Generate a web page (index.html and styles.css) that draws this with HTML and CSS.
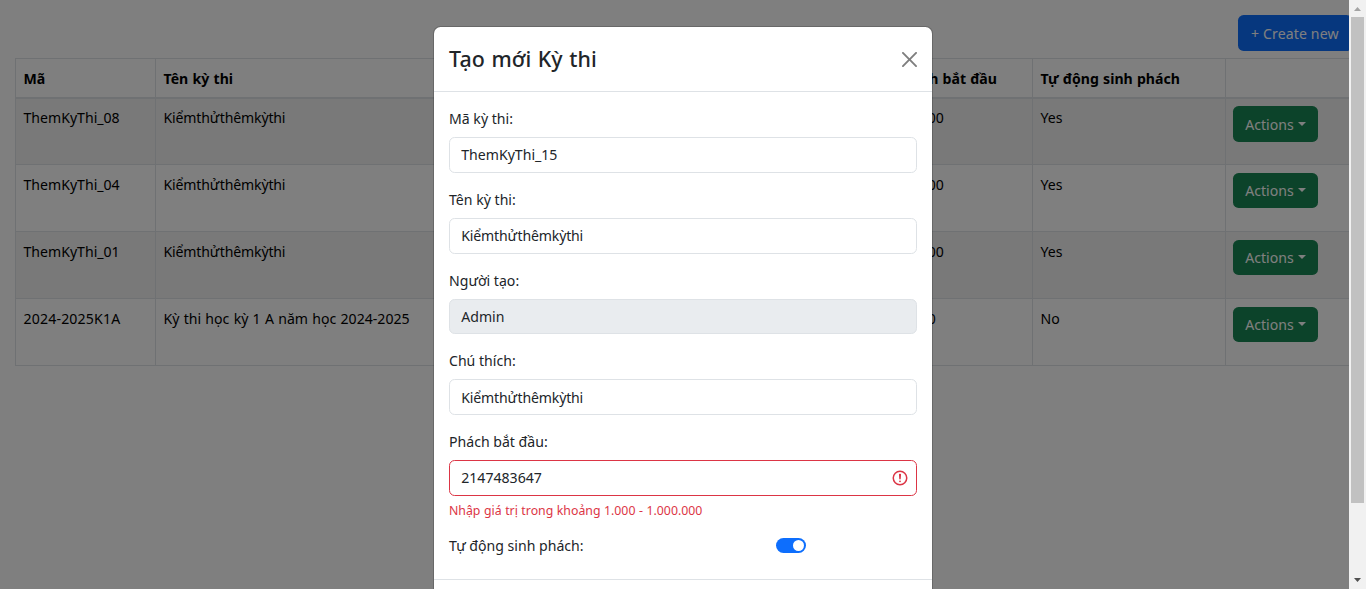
FILE: index.html
```html
<!DOCTYPE html>
<html lang="vi">
<head>
<meta charset="utf-8">
<title>Kỳ thi</title>
<link rel="stylesheet" href="styles.css">
</head>
<body>
<div class="window">
  <main class="page">
    <div class="toolbar"><button class="btn btn-primary">+ Create new</button></div>
    <table class="table">
      <colgroup><col class="c-code"><col class="c-name"><col class="c-start"><col class="c-auto"><col class="c-act"></colgroup>
      <thead>
        <tr><th>Mã</th><th>Tên kỳ thi</th><th>Phách bắt đầu</th><th>Tự động sinh phách</th><th></th></tr>
      </thead>
      <tbody>
        <tr><td>ThemKyThi_08</td><td><span class="tight">Kiểmthửthêmkỳthi</span></td><td>100000</td><td>Yes</td><td class="act"><button class="btn btn-success">Actions<i class="caret"></i></button></td></tr>
        <tr><td>ThemKyThi_04</td><td><span class="tight">Kiểmthửthêmkỳthi</span></td><td>100000</td><td>Yes</td><td class="act"><button class="btn btn-success">Actions<i class="caret"></i></button></td></tr>
        <tr><td>ThemKyThi_01</td><td><span class="tight">Kiểmthửthêmkỳthi</span></td><td>100000</td><td>Yes</td><td class="act"><button class="btn btn-success">Actions<i class="caret"></i></button></td></tr>
        <tr><td><span class="loose">2024-2025K1A</span></td><td>Kỳ thi học kỳ 1 A năm học 2024-2025</td><td>10000</td><td>No</td><td class="act"><button class="btn btn-success">Actions<i class="caret"></i></button></td></tr>
      </tbody>
    </table>
  </main>
  <div class="scrollbar">
    <svg class="arrow" viewBox="0 0 17 17"><path d="M5 11h7L8.500 7z" fill="#a3a3a3"/></svg>
    <div class="thumb"></div>
    <svg class="arrow arrow-down" viewBox="0 0 17 17"><path d="M5 6h7L8.500 10z" fill="#505050"/></svg>
  </div>
</div>
<div class="backdrop"></div>
<div class="modal">
  <div class="modal-header">
    <h4>Tạo mới Kỳ thi</h4>
    <svg class="close" viewBox="0 0 16 16"><path d="M.293.293a1 1 0 0 1 1.414 0L8 6.586 14.293.293a1 1 0 1 1 1.414 1.414L9.414 8l6.293 6.293a1 1 0 0 1-1.414 1.414L8 9.414l-6.293 6.293a1 1 0 0 1-1.414-1.414L6.586 8 .293 1.707a1 1 0 0 1 0-1.414z"/></svg>
  </div>
  <div class="modal-body">
    <div class="field"><label>Mã kỳ thi:</label><div class="input">ThemKyThi_15</div></div>
    <div class="field"><label>Tên kỳ thi:</label><div class="input"><span class="tight">Kiểmthửthêmkỳthi</span></div></div>
    <div class="field"><label>Người tạo:</label><div class="input disabled">Admin</div></div>
    <div class="field"><label>Chú thích:</label><div class="input"><span class="tight">Kiểmthửthêmkỳthi</span></div></div>
    <div class="field"><label>Phách bắt đầu:</label>
      <div class="input invalid"><span>2147483647</span>
        <svg class="alert" viewBox="0 0 12 12" fill="none" stroke="#dc3545"><circle cx="6" cy="6" r="4.500"/><path stroke-linejoin="round" d="M5.800 3.600h.4L6 6.500z"/><circle cx="6" cy="8.200" r=".6" fill="#dc3545" stroke="none"/></svg>
      </div>
      <div class="feedback">Nhập giá trị trong khoảng 1.000 - 1.000.000</div>
    </div>
    <div class="switch-row"><label>Tự động sinh phách:</label><span class="switch"></span></div>
  </div>
  <div class="modal-footer"></div>
</div>
</body>
</html>
```
FILE: styles.css
```css
* { box-sizing: border-box; }
html { overflow: hidden; }
body {
  margin: 0;
  height: 589px;
  overflow: hidden;
  position: relative;
  font: 14.1px/22.5px "Noto Sans", "Open Sans", sans-serif;
  color: #212529;
  background: #fff;
}
.window { display: flex; height: 589px; }
.page { flex: 1; min-width: 0; overflow: hidden; padding: 15px 0 0 15px; }
.toolbar { display: flex; width: 1337px; justify-content: flex-end; height: 43px; }
.btn {
  display: inline-flex;
  align-items: center;
  height: 35.75px;
  padding: 2px 12.25px 0;
  border: 0;
  border-radius: 5.6px;
  font: inherit;
  color: #fff;
}
.btn-primary { width: 114px; padding-left: 13px; background: #0d6efd; white-space: nowrap; letter-spacing: .12px; }
.btn-success { width: 85px; background: #198754; }
.caret {
  margin-left: 4px;
  margin-top: -2px;
  border: 4.3px solid transparent;
  border-top-color: #fff;
  border-bottom: 0;
}
.tight { letter-spacing: -.17px; }
.loose { letter-spacing: .17px; }
.table {
  width: 1390px;
  table-layout: fixed;
  border-collapse: collapse;
  color: #000;
}
.c-code { width: 140px; }
.c-name { width: 732px; }
.c-start { width: 145px; }
.c-auto { width: 193px; }
.c-act { width: 180px; }
.table th, .table td {
  padding: 8.5px 7.5px 0;
  border: 1px solid #dee2e6;
  text-align: left;
  vertical-align: top;
}
.table th { height: 39px; font-weight: 700; border-bottom: 2px solid #dee2e6; word-spacing: .6px; }
.table td { height: 67px; word-spacing: .6px; }
.table td.act { padding: 7.5px 7px 0; }
.table tbody tr:nth-child(odd) { background: #f2f2f2; }
.scrollbar { width: 17px; background: #f1f1f1; display: flex; flex-direction: column; align-items: center; position: relative; z-index: 2; }
.arrow { width: 17px; height: 17px; display: block; }
.arrow-down { margin-top: auto; }
.thumb { width: 13px; height: 486px; background: #c1c1c1; }
.backdrop { position: absolute; inset: 0 17px 0 0; background: rgba(0, 0, 0, .5); }
.modal {
  position: absolute;
  top: 26.25px;
  bottom: 0;
  left: 433px;
  width: 500px;
  background: #fff;
  background-clip: padding-box;
  border: 1px solid rgba(0, 0, 0, .175);
  border-bottom: 0;
  border-radius: 7.5px 7.5px 0 0;
}
.modal-header {
  display: flex;
  justify-content: space-between;
  align-items: center;
  padding: 15px;
  border-bottom: 1px solid #dee2e6;
}
.modal-header h4 { margin: 0; font-size: 21.4px; font-weight: 500; line-height: 33.75px; letter-spacing: .1px; word-spacing: .8px; }
.close { width: 15px; height: 15px; opacity: .5; }
.modal-body { padding: 15px 15px 7.5px; }
.field { margin-bottom: 15px; }
.field label, .switch-row label { display: block; height: 22.5px; padding-top: 1px; }
.field label { margin-bottom: 7.5px; }
.input {
  display: flex;
  align-items: center;
  justify-content: space-between;
  height: 35.75px;
  padding: 1.5px 7.5px 0 11.25px;
  border: 1px solid #dee2e6;
  border-radius: 5.6px;
}
.disabled { background: #e9ecef; }
.invalid { border-color: #dc3545; }
.alert { width: 18px; height: 18px; margin-top: -2px; }
.feedback { height: 19.7px; margin-top: 3.75px; padding-top: 1px; font-size: 12.3px; line-height: 19.7px; word-spacing: .35px; color: #dc3545; }
.switch-row { display: flex; height: 30px; margin-bottom: 7.5px; }
.switch-row { margin-bottom: 0; height: 37.5px; }
.switch-row label { width: 327px; }
.switch {
  width: 30px;
  height: 15px;
  margin-top: 3.75px;
  padding: 2px;
  border-radius: 8px;
  background: #0d6efd;
  display: flex;
  justify-content: flex-end;
}
.switch::after { content: ""; width: 11px; height: 11px; border-radius: 50%; background: #fff; }
.modal-footer { border-top: 1px solid #dee2e6; }
```
